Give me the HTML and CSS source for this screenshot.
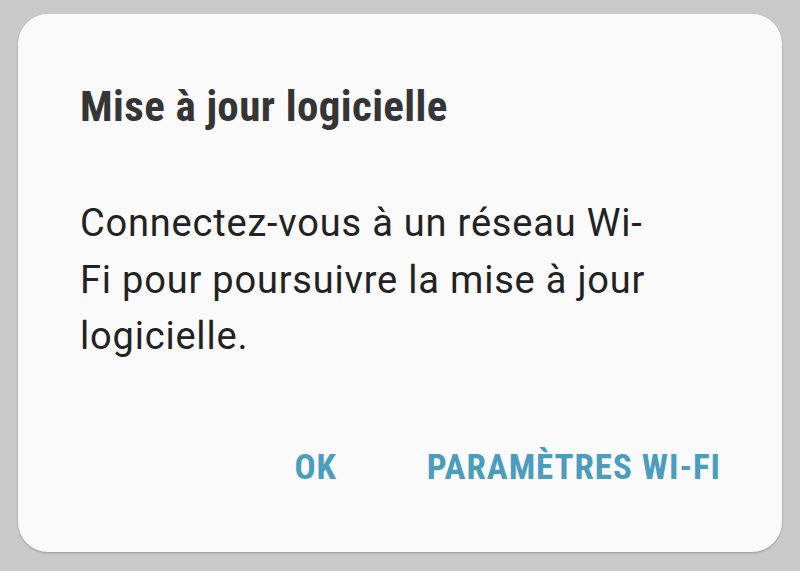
FILE: index.html
```html
<!DOCTYPE html>
<html lang="fr">
<head>
<meta charset="utf-8">
<title>Mise à jour logicielle</title>
<link rel="stylesheet" href="styles.css">
</head>
<body>
<div class="dialog">
  <h1 class="title">Mise à jour logicielle</h1>
  <p class="message">Connectez-vous à un réseau Wi-<br>Fi pour poursuivre la mise à jour<br>logicielle.</p>
  <div class="actions">
    <span class="btn">OK</span>
    <span class="btn">PARAMÈTRES WI-FI</span>
  </div>
</div>
</body>
</html>
```
FILE: styles.css
```css
html, body {
  margin: 0;
  padding: 0;
}
body {
  background: #c9c9c9;
  width: 800px;
  height: 571px;
  overflow: hidden;
  padding-top: 14px;
  box-sizing: border-box;
  font-family: "Roboto", "Liberation Sans", sans-serif;
}
.dialog {
  margin-left: 18px;
  width: 764px;
  height: 538px;
  background: #fafafa;
  border-radius: 30px;
  box-shadow: 0 1px 2px rgba(0,0,0,0.25);
  box-sizing: border-box;
  padding: 67px 61px 64px 62px;
  display: flex;
  flex-direction: column;
}
.title {
  margin: 0;
  font-size: 43px;
  line-height: 50px;
  font-weight: 700;
  font-stretch: condensed;
  letter-spacing: 0.4px;
  color: #353535;
}
.message {
  margin: 64px 0 0 0;
  font-size: 38px;
  line-height: 56.5px;
  letter-spacing: 0.8px;
  color: #222;
}
.actions {
  margin-top: auto;
  display: flex;
  justify-content: flex-end;
  gap: 90px;
}
.btn {
  font-size: 35px;
  line-height: 40px;
  font-weight: 700;
  font-stretch: condensed;
  letter-spacing: 0.95px;
  color: #4a9dbd;
}
```
